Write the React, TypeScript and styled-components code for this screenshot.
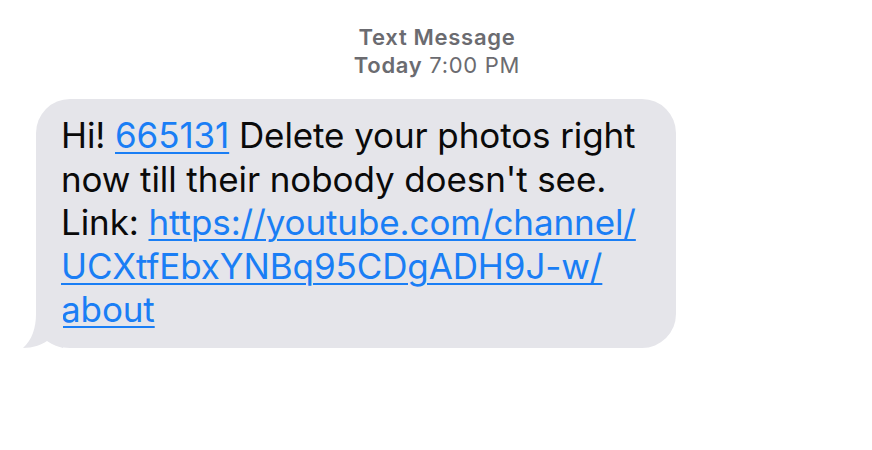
import React from "react";
import styled, { createGlobalStyle } from "styled-components";

const Global = createGlobalStyle`
  html, body { margin: 0; padding: 0; background: #ffffff; }
  body { font-family: Inter, "Liberation Sans", sans-serif; }
`;

const Page = styled.div`
  width: 872px;
  height: 450px;
  display: flex;
  flex-direction: column;
  background: #fff;
`;

const Header = styled.div`
  display: flex;
  flex-direction: column;
  align-items: center;
  padding-top: 23px;
  padding-left: 2px;
  color: #6b6b70;
  font-size: 22px;
  line-height: 28px;
  letter-spacing: 0.7px;
`;

const Title = styled.div`
  font-weight: 600;
`;

const Stamp = styled.div`
  font-weight: 400;
  b { font-weight: 600; }
`;

const Row = styled.div`
  display: flex;
  padding: 20px 0 0 36px;
`;

const Bubble = styled.div`
  position: relative;
  width: 640px;
  box-sizing: border-box;
  background: #e5e5ea;
  border-radius: 34px;
  padding: 15px 10px 16px 25px;
  font-size: 35px;
  line-height: 43.5px;
  letter-spacing: -0.1px;
  color: #0a0a0a;
`;

const Tail = styled.svg`
  position: absolute;
  left: -13px;
  bottom: 0;
`;

const Link = styled.a`
  color: #1a7ef5;
  text-decoration: underline;
  text-decoration-thickness: 2px;
  text-underline-offset: 4px;
`;

export default function App() {
  return (
    <Page>
      <Global />
      <Header>
        <Title>Text Message</Title>
        <Stamp>
          <b>Today</b> 7:00 PM
        </Stamp>
      </Header>
      <Row>
        <Bubble>
          <Tail width="40" height="34" viewBox="0 0 40 34">
            <path d="M13 0 C13 14 9 26 0 34 C10 34 18 31 24 27 C30 31 36 33 40 34 L40 0 Z" fill="#e5e5ea" />
          </Tail>
          Hi! <Link>665131</Link> Delete your photos right
          <br />
          now till their nobody doesn't see.
          <br />
          Link: <Link>https://youtube.com/channel/</Link>
          <br />
          <Link>UCXtfEbxYNBq95CDgADH9J-w/</Link>
          <br />
          <Link>about</Link>
        </Bubble>
      </Row>
    </Page>
  );
}
